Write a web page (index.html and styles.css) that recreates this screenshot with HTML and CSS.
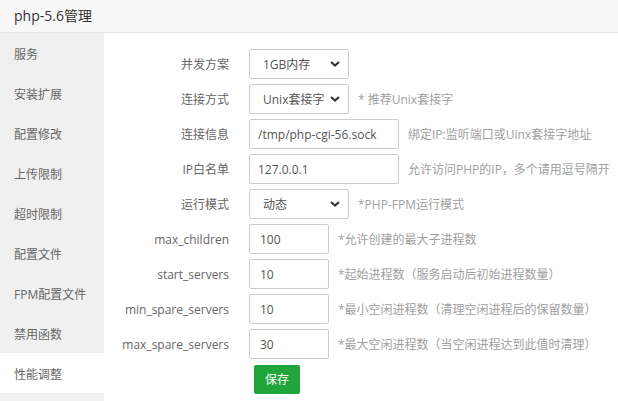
FILE: index.html
```html
<!DOCTYPE html>
<html lang="zh-CN">
<head>
  <meta charset="UTF-8" />
  <title>php-5.6管理</title>
  <link rel="stylesheet" href="styles.css">
</head>
<body>
  <header class="title-bar">php-5.6管理</header>
  <div class="layout">
    <nav class="side-menu">
      <a class="menu-item">服务</a>
      <a class="menu-item">安装扩展</a>
      <a class="menu-item">配置修改</a>
      <a class="menu-item">上传限制</a>
      <a class="menu-item">超时限制</a>
      <a class="menu-item">配置文件</a>
      <a class="menu-item">FPM配置文件</a>
      <a class="menu-item">禁用函数</a>
      <a class="menu-item active">性能调整</a>
    </nav>

    <main class="content">
      <form class="perf-form" autocomplete="off">
        <div class="row">
          <label class="label">并发方案</label>
          <span class="sel">
            <select class="control w100">
              <option>1GB内存</option>
            </select>
            <svg class="chev" viewBox="0 0 10 6"><path d="M1 1l4 3.6L9 1" fill="none" stroke="#333" stroke-width="2"/></svg>
          </span>
        </div>

        <div class="row">
          <label class="label">连接方式</label>
          <span class="sel">
            <select class="control w100">
              <option>Unix套接字</option>
            </select>
            <svg class="chev" viewBox="0 0 10 6"><path d="M1 1l4 3.6L9 1" fill="none" stroke="#333" stroke-width="2"/></svg>
          </span>
          <span class="hint">* 推荐Unix套接字</span>
        </div>

        <div class="row">
          <label class="label">连接信息</label>
          <input class="control w150" type="text" value="/tmp/php-cgi-56.sock" />
          <span class="hint">绑定IP:监听端口或Uinx套接字地址</span>
        </div>

        <div class="row">
          <label class="label">IP白名单</label>
          <input class="control w150" type="text" value="127.0.0.1" />
          <span class="hint">允许访问PHP的IP，多个请用逗号隔开</span>
        </div>

        <div class="row">
          <label class="label">运行模式</label>
          <span class="sel">
            <select class="control w100">
              <option>动态</option>
            </select>
            <svg class="chev" viewBox="0 0 10 6"><path d="M1 1l4 3.6L9 1" fill="none" stroke="#333" stroke-width="2"/></svg>
          </span>
          <span class="hint">*PHP-FPM运行模式</span>
        </div>

        <div class="row">
          <label class="label">max_children</label>
          <input class="control w80" type="number" value="100" />
          <span class="hint">*允许创建的最大子进程数</span>
        </div>

        <div class="row">
          <label class="label">start_servers</label>
          <input class="control w80" type="number" value="10" />
          <span class="hint">*起始进程数（服务启动后初始进程数量）</span>
        </div>

        <div class="row">
          <label class="label">min_spare_servers</label>
          <input class="control w80" type="number" value="10" />
          <span class="hint">*最小空闲进程数（清理空闲进程后的保留数量）</span>
        </div>

        <div class="row">
          <label class="label">max_spare_servers</label>
          <input class="control w80" type="number" value="30" />
          <span class="hint">*最大空闲进程数（当空闲进程达到此值时清理）</span>
        </div>

        <div class="row">
          <span class="label"></span>
          <button type="button" class="btn-save">保存</button>
        </div>
      </form>
    </main>
  </div>
</body>
</html>
```

FILE: styles.css
```css
html, body {
  margin: 0;
  padding: 0;
  height: 100%;
  overflow: hidden;
}
body {
  font-family: "Open Sans", "Noto Sans CJK SC", sans-serif;
  font-size: 12px;
  color: #555;
  background: #fff;
}
.title-bar {
  height: 33px;
  line-height: 31px;
  padding-left: 14px;
  font-size: 14px;
  color: #333;
  background: #f8f8f8;
  border-bottom: 1px solid #e6e6e6;
  box-sizing: border-box;
}
.layout {
  display: flex;
  height: calc(100% - 33px);
}
.side-menu {
  width: 104px;
  flex: none;
  background: #f0f0f0;
  display: flex;
  flex-direction: column;
}
.menu-item {
  display: block;
  height: 36px;
  line-height: 36px;
  padding: 4px 0 0 14px;
  color: #666;
  cursor: pointer;
}
.menu-item.active {
  background: #fff;
}
.content {
  flex: 1;
  padding-top: 16px;
}
.perf-form {
  display: flex;
  flex-direction: column;
  gap: 5px;
}
.row {
  display: flex;
  align-items: center;
  height: 30px;
}
.label {
  width: 125px;
  flex: none;
  text-align: right;
  margin-right: 20px;
  color: #666;
  font-size: 12px;
}
.control {
  box-sizing: border-box;
  height: 30px;
  border: 1px solid #ccc;
  border-radius: 2px;
  font-family: inherit;
  font-size: 12px;
  color: #555;
  background: #fff;
  padding: 0 8px;
  outline: none;
}
input[type=number] {
  -moz-appearance: textfield;
  padding-left: 10px;
}
input[type=number]::-webkit-inner-spin-button,
input[type=number]::-webkit-outer-spin-button {
  -webkit-appearance: none;
  margin: 0;
}
.w80 { width: 80px; }
.w100 { width: 100px; }
.w150 { width: 150px; }
.sel {
  position: relative;
  display: inline-block;
  height: 30px;
}
.sel select {
  -webkit-appearance: none;
  appearance: none;
  padding-left: 13px;
  padding-right: 24px;
}
.chev {
  position: absolute;
  right: 9px;
  top: 12px;
  width: 10px;
  height: 6px;
  pointer-events: none;
}
.hint {
  margin-left: 9px;
  color: #a0a0a0;
  font-size: 12px;
  white-space: nowrap;
}
.btn-save {
  margin-left: 5px;
  width: 46px;
  height: 29px;
  border: none;
  border-radius: 2px;
  background: #20a53a;
  color: #fff;
  font-family: inherit;
  font-size: 12px;
  cursor: pointer;
}
```
